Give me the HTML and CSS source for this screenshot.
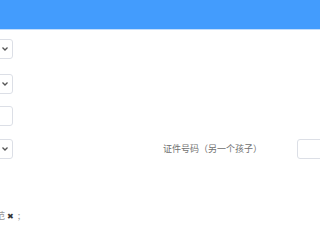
FILE: index.html
```html
<!DOCTYPE html>
<html lang="zh">
<head>
<meta charset="utf-8">
<link rel="stylesheet" href="styles.css">
</head>
<body>
<header class="topbar"></header>
<main class="form">
  <div class="row row-1">
    <div class="cell-left"><div class="field select"><svg class="chev" width="6" height="4" viewBox="0 0 6 4"><path d="M0.5 0.5 L3 3 L5.5 0.5" fill="none" stroke="#555" stroke-width="1.3"/></svg></div></div>
  </div>
  <div class="row row-2">
    <div class="cell-left"><div class="field select"><svg class="chev" width="6" height="4" viewBox="0 0 6 4"><path d="M0.5 0.5 L3 3 L5.5 0.5" fill="none" stroke="#555" stroke-width="1.3"/></svg></div></div>
  </div>
  <div class="row row-3">
    <div class="cell-left"><div class="field"></div></div>
  </div>
  <div class="row row-4">
    <div class="cell-left"><div class="field select"><svg class="chev" width="6" height="4" viewBox="0 0 6 4"><path d="M0.5 0.5 L3 3 L5.5 0.5" fill="none" stroke="#555" stroke-width="1.3"/></svg></div></div>
    <label class="label">证件号码（另一个孩子）</label>
    <div class="field input-right"></div>
  </div>
  <p class="note"><span class="clip">范</span><span class="x">✖</span> <span class="semi">;</span></p>
</main>
</body>
</html>
```

FILE: styles.css
```css
html, body {
  margin: 0;
  padding: 0;
  background: #fff;
  overflow: hidden;
  font-family: "Noto Sans CJK SC", "Noto Sans", sans-serif;
}
.topbar {
  height: 29px;
  background: #439cfd;
  border-bottom: 1px solid #c3ddfb;
}
.form {
  display: flex;
  flex-direction: column;
}
.row {
  display: flex;
  align-items: center;
  height: 20px;
}
.row-1 { margin-top: 9px; }
.row-2 { margin-top: 15px; }
.row-3 { margin-top: 12px; }
.row-4 { margin-top: 13px; }
.cell-left {
  width: 13px;
  height: 20px;
  overflow: hidden;
  flex: none;
}
.field {
  box-sizing: border-box;
  width: 60px;
  height: 20px;
  margin-left: -47px;
  border: 1px solid #dcdfe6;
  border-radius: 3px;
  background: #fff;
  display: flex;
  align-items: center;
  justify-content: flex-end;
}
.select { padding-right: 4px; }
.chev { display: block; }
.label {
  margin-left: 150px;
  width: 134px;
  flex: none;
  font-size: 9px;
  line-height: 12px;
  color: #707070;
  white-space: nowrap;
}
.input-right {
  margin-left: 0;
  width: 60px;
  flex: none;
}
.note {
  margin: 51px 0 0 -4px;
  font-size: 9px;
  line-height: 12px;
  color: #999;
  white-space: nowrap;
}
.x {
  color: #333;
  font-family: "DejaVu Sans", sans-serif;
  font-size: 8px;
  margin-left: 2px;
}
.semi {
  margin-left: 2px;
}
```
